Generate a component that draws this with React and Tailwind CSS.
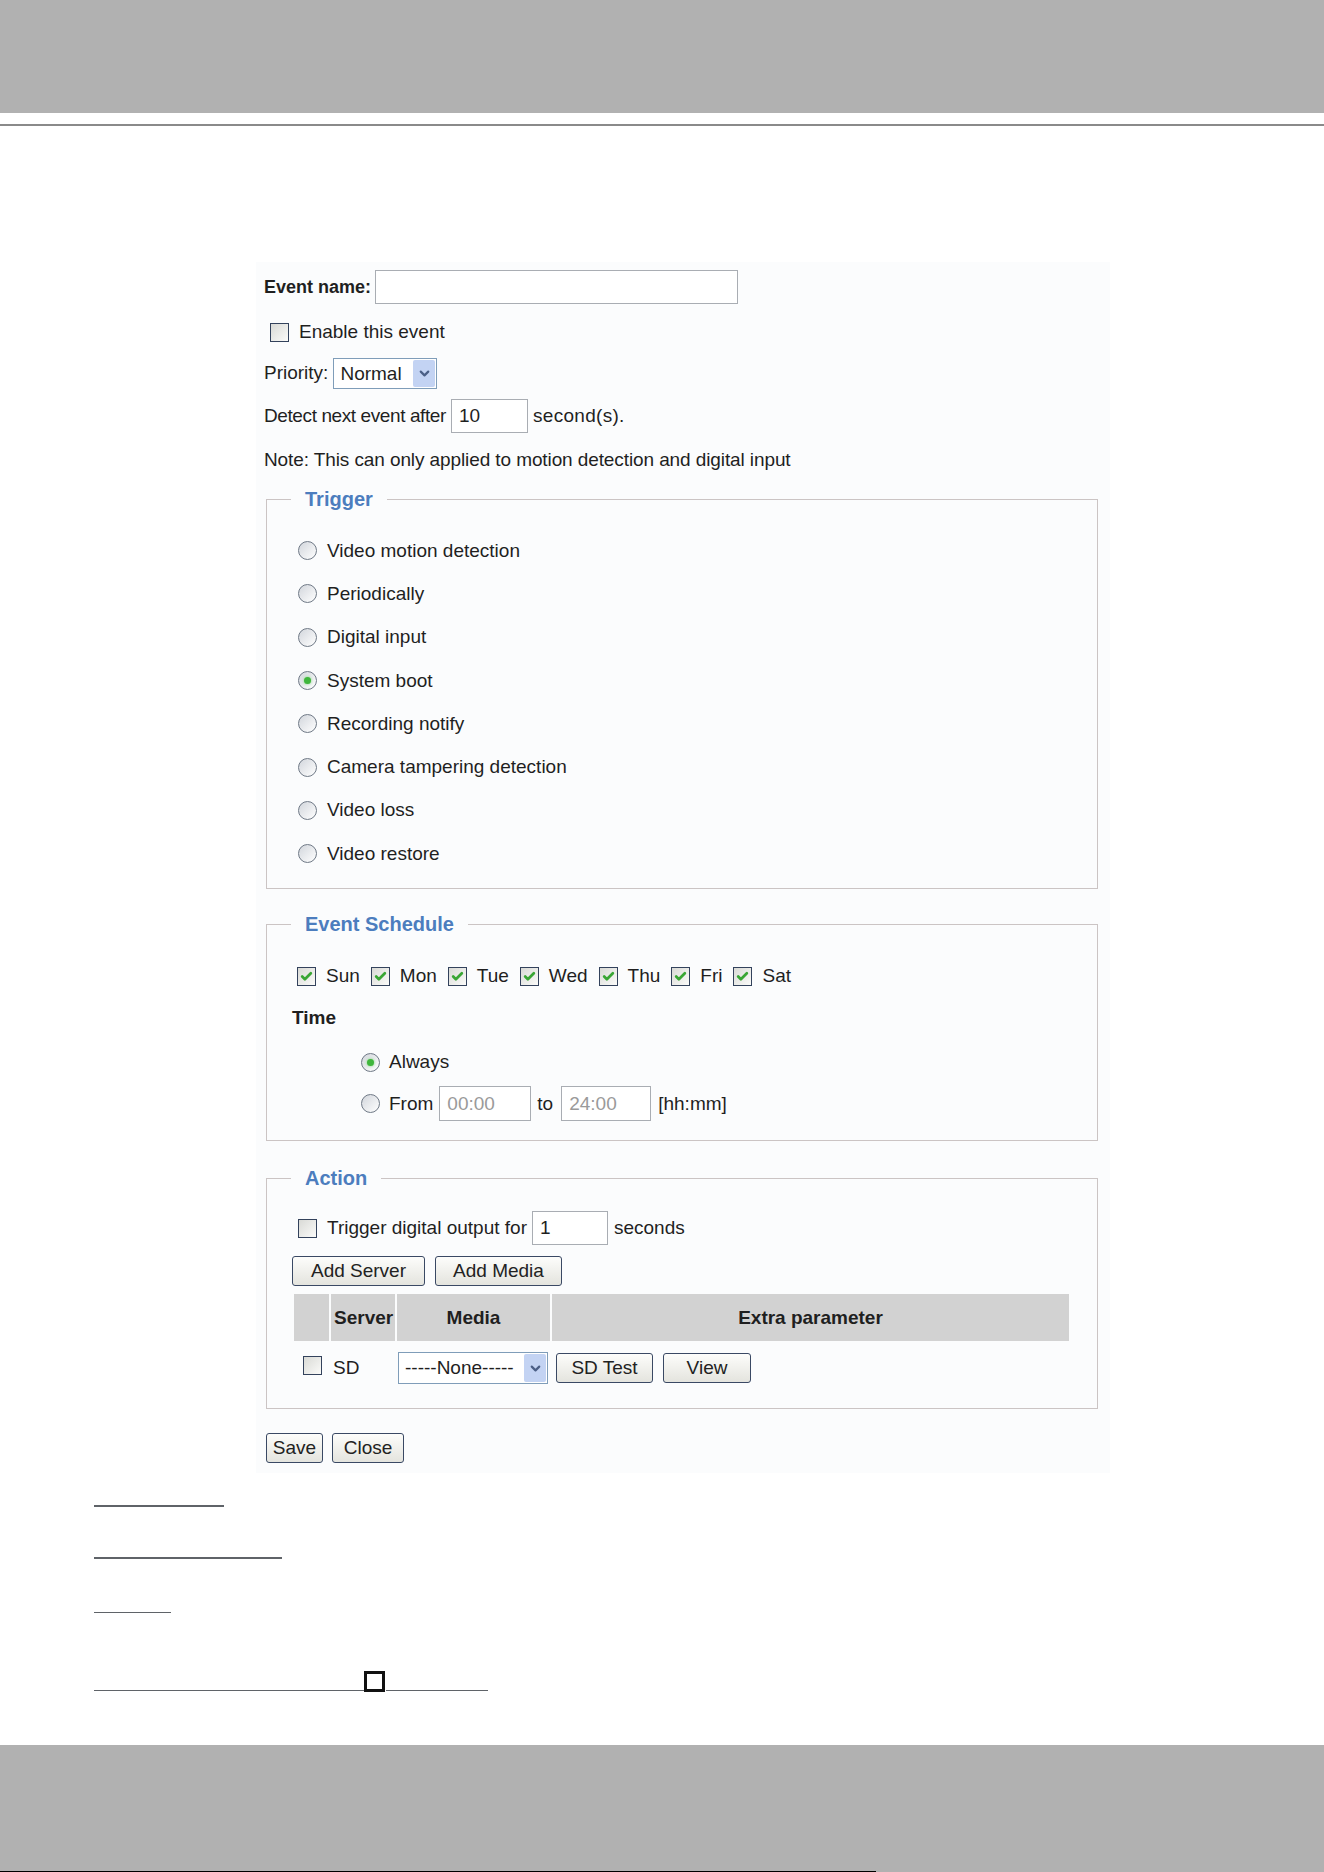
import { Check, ChevronDown } from 'lucide-react'

function Checkbox({ checked }) {
  return (
    <span className="inline-flex h-[19px] w-[19px] shrink-0 items-center justify-center border border-[#33425c] bg-linear-to-br from-[#d9dad6] to-[#fbfbf9]">
      {checked && <Check className="h-[13px] w-[13px] text-[#39a634]" strokeWidth={5} />}
    </span>
  )
}

function Radio({ checked }) {
  return (
    <span className="inline-flex h-[19px] w-[19px] shrink-0 items-center justify-center rounded-full border border-[#6f7986] bg-linear-to-br from-[#d2d6dc] to-white">
      {checked && <span className="h-[7px] w-[7px] rounded-full bg-[#3fb63c] shadow-[0_0_3px_#7ed67a]" />}
    </span>
  )
}

function Select({ value, className }) {
  return (
    <div className={`flex border border-[#7f9db9] bg-white ${className}`}>
      <span className="flex-1 truncate pl-[6px] leading-[29px]">{value}</span>
      <span className="m-[1px] flex w-[22px] items-center justify-center rounded-[2px] bg-[#c3d3f3]">
        <ChevronDown className="h-[15px] w-[15px] text-[#4b5f86]" strokeWidth={3.5} />
      </span>
    </div>
  )
}

function Button({ children, className }) {
  return (
    <button className={`h-[30px] rounded-[3px] border border-[#3a4964] bg-linear-to-b from-[#fdfdfb] to-[#e4e4de] text-center leading-[28px] text-[#222] ${className}`}>
      {children}
    </button>
  )
}

function Input({ value, className, disabled }) {
  return (
    <div className={`border border-[#a9adb3] bg-white px-[7px] ${disabled ? 'text-[#9a9a9a]' : ''} ${className}`}>
      {value}
    </div>
  )
}

function Group({ title, children, className }) {
  return (
    <fieldset className={`ml-[2px] w-[832px] border border-[#cbc4c4] ${className}`}>
      <legend className="ml-[24px] px-[14px] text-[20px] font-bold leading-[22px] text-[#4c7dbe]">{title}</legend>
      {children}
    </fieldset>
  )
}

const triggers = [
  'Video motion detection',
  'Periodically',
  'Digital input',
  'System boot',
  'Recording notify',
  'Camera tampering detection',
  'Video loss',
  'Video restore',
]

const days = ['Sun', 'Mon', 'Tue', 'Wed', 'Thu', 'Fri', 'Sat']

export default function App() {
  return (
    <div className="flex h-[1872px] w-[1324px] flex-col bg-white font-['Liberation_Sans',Arial,sans-serif] text-[19px] leading-[22px] text-[#1f1f1f]">
      {/* page header */}
      <div className="h-[113px] bg-[#b1b1b1]" />
      <div className="mt-[11px] h-[2px] bg-[#8a8a8a]" />

      {/* event settings form */}
      <div className="ml-[256px] mt-[136px] w-[854px] bg-[#fbfcfd] pb-[10px] pl-[8px] pt-[8px]">
        <div className="flex h-[34px] items-center">
          <span className="text-[18px] font-bold">Event name:</span>
          <Input className="ml-[4px] h-[34px] w-[363px]" value="" />
        </div>

        <div className="mt-[11px] flex h-[34px] items-center pl-[6px]">
          <Checkbox />
          <span className="ml-[10px]">Enable this event</span>
        </div>

        <div className="mt-[7px] flex h-[34px] items-center">
          <span>Priority:</span>
          <Select className="ml-[5px] h-[31px] w-[104px]" value="Normal" />
        </div>

        <div className="mt-[9px] flex h-[34px] items-center">
          <span className="tracking-[-0.4px]">Detect next event after</span>
          <Input className="ml-[5px] h-[34px] w-[77px] leading-[32px]" value="10" />
          <span className="ml-[5px] tracking-[0.3px]">second(s).</span>
        </div>

        <div className="mt-[10px] flex h-[34px] items-center tracking-[-0.1px]">
          Note: This can only applied to motion detection and digital input
        </div>

        <Group title="Trigger" className="mt-[11px]">
          <div className="pb-[13px] pl-[31px] pt-[19px]">
            {triggers.map((t) => (
              <div key={t} className="flex h-[43.3px] items-center">
                <Radio checked={t === 'System boot'} />
                <span className="ml-[10px]">{t}</span>
              </div>
            ))}
          </div>
        </Group>

        <Group title="Event Schedule" className="mt-[24px]">
          <div className="pb-[19px] pl-[30px] pt-[24px]">
            <div className="flex h-[34px] items-center">
              {days.map((d, i) => (
                <span key={d} className={`flex items-center ${i > 0 ? 'ml-[11px]' : ''}`}>
                  <Checkbox checked />
                  <span className="ml-[10px]">{d}</span>
                </span>
              ))}
            </div>
            <div className="-ml-[5px] mt-[8px] flex h-[34px] items-center font-bold">Time</div>
            <div className="ml-[64px] mt-[10px] flex h-[34px] items-center">
              <Radio checked />
              <span className="ml-[9px]">Always</span>
            </div>
            <div className="ml-[64px] mt-[7px] flex h-[35px] items-center">
              <Radio />
              <span className="ml-[9px]">From</span>
              <Input className="ml-[6px] h-[35px] w-[92px] leading-[33px]" value="00:00" disabled />
              <span className="ml-[6px]">to</span>
              <Input className="ml-[8px] h-[35px] w-[90px] leading-[33px]" value="24:00" disabled />
              <span className="ml-[7px]">[hh:mm]</span>
            </div>
          </div>
        </Group>

        <Group title="Action" className="mt-[26px]">
          <div className="pb-[20px] pl-[27px] pt-[22px]">
            <div className="ml-[4px] flex h-[34px] items-center">
              <Checkbox />
              <span className="ml-[10px]">Trigger digital output for</span>
              <Input className="ml-[5px] h-[34px] w-[76px] leading-[32px]" value="1" />
              <span className="ml-[6px]">seconds</span>
            </div>
            <div className="-ml-[2px] mt-[11px] flex">
              <Button className="w-[133px]">Add Server</Button>
              <Button className="ml-[10px] w-[127px]">Add Media</Button>
            </div>

            <div className="mt-[8px] grid h-[47px] grid-cols-[35px_64px_153px_517px] gap-x-[2px] font-bold">
              <div className="bg-[#d2d2d2]" />
              <div className="flex items-center bg-[#d2d2d2] pl-[3px]">Server</div>
              <div className="flex items-center justify-center bg-[#d2d2d2]">Media</div>
              <div className="flex items-center justify-center bg-[#d2d2d2]">Extra parameter</div>
            </div>
            <div className="mt-[7px] grid h-[40px] grid-cols-[35px_64px_153px_517px] items-center gap-x-[2px]">
              <div className="pl-[9px]">
                <Checkbox />
              </div>
              <div className="pl-[2px]">SD</div>
              <div className="pl-[1px]">
                <Select className="h-[32px] w-[150px]" value="-----None-----" />
              </div>
              <div className="flex pl-[4px]">
                <Button className="w-[97px]">SD Test</Button>
                <Button className="ml-[10px] w-[88px]">View</Button>
              </div>
            </div>
          </div>
        </Group>

        <div className="ml-[2px] mt-[24px] flex">
          <Button className="w-[57px]">Save</Button>
          <Button className="ml-[9px] w-[72px]">Close</Button>
        </div>
      </div>

      {/* underlined blanks below the form */}
      <div className="ml-[94px] mt-[32px] h-[2px] w-[130px] bg-[#5f6368]" />
      <div className="ml-[94px] mt-[50px] h-[2px] w-[188px] bg-[#5f6368]" />
      <div className="ml-[94px] mt-[53px] h-[1px] w-[77px] bg-[#5f6368]" />
      <div className="ml-[94px] mt-[58px] flex items-end">
        <div className="mb-[1px] h-[1px] w-[270px] bg-[#5f6368]" />
        <div className="h-[21px] w-[21px] border-[3px] border-[#111]" />
        <div className="mb-[1px] ml-[1px] h-[1px] w-[102px] bg-[#5f6368]" />
      </div>

      {/* page footer */}
      <div className="mt-auto flex h-[127px] flex-col justify-end bg-[#b1b1b1]">
        <div className="h-[1px] w-[876px] bg-black" />
      </div>
    </div>
  )
}
